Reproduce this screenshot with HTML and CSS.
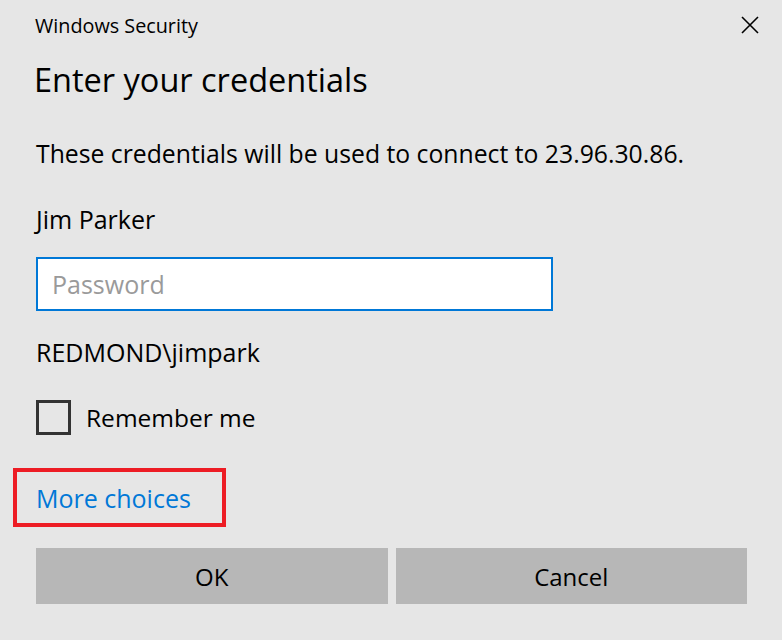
FILE: index.html
```html
<!DOCTYPE html>
<html>
<head>
<meta charset="utf-8">
<link rel="stylesheet" href="styles.css">
</head>
<body>
<div class="dialog">
  <div class="titlebar">
    <span class="app-title">Windows Security</span>
    <button class="close" aria-label="Close">
      <svg width="18" height="18" viewBox="0 0 18 18"><path d="M1 1L17 17M17 1L1 17" stroke="#000" stroke-width="1.6" fill="none"/></svg>
    </button>
  </div>
  <h1 class="heading">Enter your credentials</h1>
  <p class="info">These credentials will be used to connect to 23.96.30.86.</p>
  <p class="user">Jim Parker</p>
  <div class="field"><span class="placeholder">Password</span></div>
  <p class="domain">REDMOND\jimpark</p>
  <label class="remember"><span class="checkbox"></span><span>Remember me</span></label>
  <div class="more-wrap"><span class="more">More choices</span></div>
  <div class="buttons">
    <button class="btn">OK</button>
    <button class="btn">Cancel</button>
  </div>
</div>
</body>
</html>
```
FILE: styles.css
```css
html, body {
  margin: 0;
  padding: 0;
  background: #e6e6e6;
}
body {
  font-family: "Open Sans", "Noto Sans", sans-serif;
  color: #000;
  width: 782px;
  height: 640px;
  overflow: hidden;
}
.dialog {
  padding: 0 36px 0 36px;
  display: flex;
  flex-direction: column;
}
.titlebar {
  display: flex;
  justify-content: space-between;
  align-items: center;
  height: 50px;
  margin-left: -1px;
}
.app-title {
  font-size: 19.8px;
  line-height: 24px;
  margin-top: 1px;
}
.close {
  background: none;
  border: 0;
  padding: 0;
  margin-right: -13px;
  width: 18px;
  height: 18px;
  display: flex;
}
.heading {
  margin: 8px 0 0 -2px;
  font-weight: 400;
  font-size: 32.5px;
  line-height: 44px;
}
.info {
  margin: 36px 0 0 0;
  font-size: 24.75px;
  line-height: 32px;
}
.user {
  margin: 33px 0 0 0;
  font-size: 25px;
  line-height: 32px;
}
.field {
  margin-top: 22px;
  width: 499px;
  height: 50px;
  border: 2px solid #0078d7;
  background: #fff;
  display: flex;
  align-items: center;
  padding-left: 14px;
  box-sizing: content-box;
}
.placeholder {
  color: #9a9a9a;
  font-size: 25px;
}
.domain {
  margin: 25px 0 0 0;
  font-size: 25px;
  line-height: 32px;
}
.remember {
  margin-top: 32px;
  display: flex;
  align-items: center;
  gap: 15px;
  font-size: 24.5px;
}
.checkbox {
  width: 29px;
  height: 29px;
  border: 3px solid #333;
}
.more-wrap {
  margin: 33px 0 0 -23px;
  width: 185px;
  height: 51px;
  border: 4px solid #ed1c24;
  display: flex;
  align-items: center;
  padding-left: 20px;
  box-sizing: content-box;
}
.more {
  color: #0078d7;
  font-size: 25px;
  margin-left: -1px;
}
.buttons {
  margin-top: 21px;
  display: flex;
  gap: 8px;
  width: 711px;
}
.btn {
  flex: 1;
  height: 56px;
  border: 0;
  background: #b7b7b7;
  font-family: inherit;
  font-size: 24px;
  color: #000;
  padding: 0;
}
```
